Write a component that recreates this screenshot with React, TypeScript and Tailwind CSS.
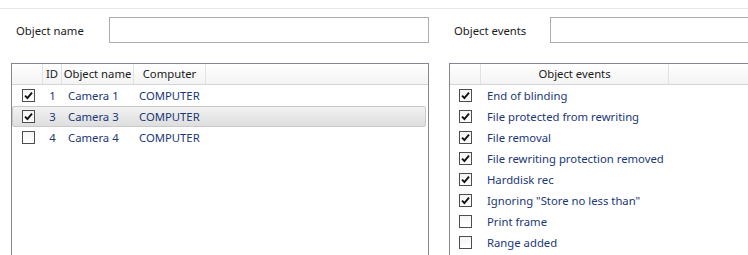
import React from "react";

const font = { fontFamily: '"Noto Sans", "Open Sans", sans-serif' };

const Check: React.FC<{ on: boolean }> = ({ on }) => (
  <span className="flex h-[13px] w-[13px] items-center justify-center border border-[#4d4d4d] bg-gradient-to-b from-[#f4f4f4] to-white">
    {on && (
      <svg width="9" height="9" viewBox="0 0 9 9">
        <path d="M1 4.6 L3.4 7 L8 1.6" fill="none" stroke="#111" strokeWidth="1.9" />
      </svg>
    )}
  </span>
);

const cameras = [
  { id: 1, name: "Camera 1", pc: "COMPUTER", on: true, sel: false },
  { id: 3, name: "Camera 3", pc: "COMPUTER", on: true, sel: true },
  { id: 4, name: "Camera 4", pc: "COMPUTER", on: false, sel: false },
];

const events = [
  { t: "End of blinding", on: true },
  { t: "File protected from rewriting", on: true },
  { t: "File removal", on: true },
  { t: "File rewriting protection removed", on: true },
  { t: "Harddisk rec", on: true },
  { t: 'Ignoring "Store no less than"', on: true },
  { t: "Print frame", on: false },
  { t: "Range added", on: false },
];

const HeaderCell: React.FC<{ w: string; children?: React.ReactNode }> = ({ w, children }) => (
  <div className={`${w} flex h-full items-center justify-center whitespace-nowrap border-r border-[#e2e2e2] pt-[1px]`}>{children}</div>
);

export default function App() {
  return (
    <div className="h-[255px] w-[748px] overflow-hidden whitespace-nowrap bg-white text-[11.3px] text-[#1b1b1b]" style={font}>
      <div className="h-[9px] border-b border-[#e6e6e6]" />
      <div className="mt-[8px] flex gap-[20px] pl-[11px]">
        {/* left column */}
        <div className="w-[418px] shrink-0">
          <div className="flex h-[26px] items-center">
            <span className="w-[98px] pl-[5px] pt-[2px]">Object name</span>
            <div className="h-[26px] w-[320px] border border-[#abadb3] bg-white" />
          </div>
          <div className="mt-[20px] h-[200px] border border-[#828790]">
            <div className="flex h-[21px] border-b border-[#d5d5d5] bg-gradient-to-b from-white to-[#f3f3f3]">
              <HeaderCell w="w-[31px]" />
              <HeaderCell w="w-[19px]">ID</HeaderCell>
              <HeaderCell w="w-[72px]">Object name</HeaderCell>
              <HeaderCell w="w-[72px]">Computer</HeaderCell>
              <div className="flex-1" />
            </div>
            {cameras.map((c) => (
              <div
                key={c.id}
                className={`flex h-[21px] w-[414px] items-center text-[#1a3778] ${
                  c.sel ? "rounded-[2px] border border-[#c9c9c9] bg-gradient-to-b from-[#f2f2f2] to-[#dedede]" : "border border-transparent"
                }`}
              >
                <div className="flex w-[30px] justify-center pl-[1px]">
                  <Check on={c.on} />
                </div>
                <div className="w-[19px] pt-[2px] text-center">{c.id}</div>
                <div className="w-[72px] pl-[6px] pt-[2px]">{c.name}</div>
                <div className="w-[72px] pl-[5px] pt-[2px]">{c.pc}</div>
              </div>
            ))}
          </div>
        </div>
        {/* right column */}
        <div className="w-[320px] shrink-0">
          <div className="flex h-[26px] items-center">
            <span className="w-[102px] pl-[5px] pt-[2px]">Object events</span>
            <div className="h-[26px] w-[220px] border border-[#abadb3] bg-white" />
          </div>
          <div className="mt-[20px] h-[200px] border border-[#828790]">
            <div className="flex h-[21px] border-b border-[#d5d5d5] bg-gradient-to-b from-white to-[#f3f3f3]">
              <HeaderCell w="w-[31px]" />
              <HeaderCell w="w-[188px]">Object events</HeaderCell>
              <div className="flex-1" />
            </div>
            {events.map((e) => (
              <div key={e.t} className="flex h-[21px] items-center text-[#1a3778]">
                <div className="flex w-[31px] justify-center">
                  <Check on={e.on} />
                </div>
                <div className="pl-[6px] pt-[2px]">{e.t}</div>
              </div>
            ))}
          </div>
        </div>
      </div>
    </div>
  );
}
